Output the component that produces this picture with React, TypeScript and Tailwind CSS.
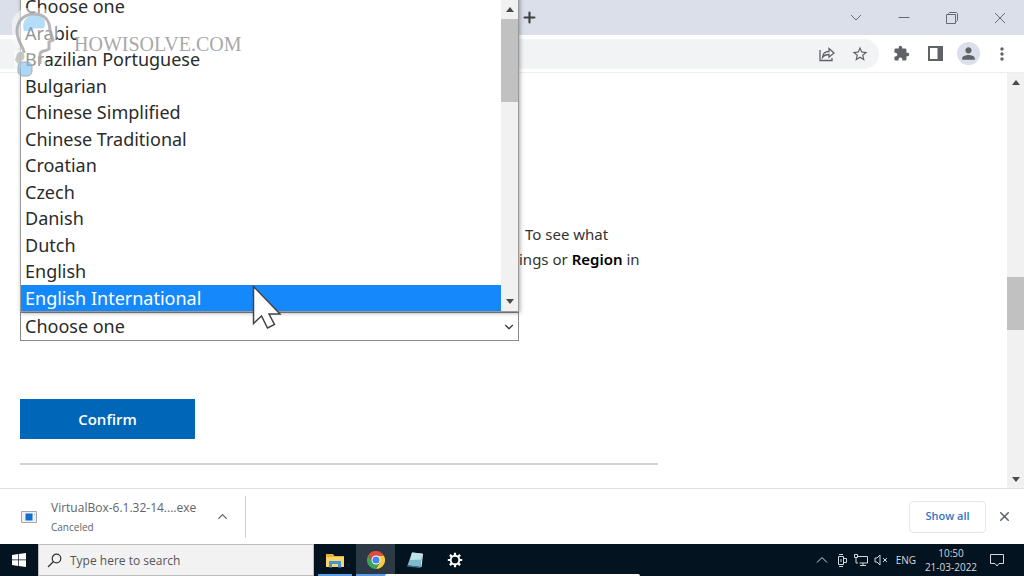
import { useState } from "react";
import { MdExtension, MdMoreVert, MdPerson, MdStarBorder } from "react-icons/md";
import { ChevronDown, ChevronUp, Plus, X } from "lucide-react";

const LANGUAGES = [
  "Choose one",
  "Arabic",
  "Brazilian Portuguese",
  "Bulgarian",
  "Chinese Simplified",
  "Chinese Traditional",
  "Croatian",
  "Czech",
  "Danish",
  "Dutch",
  "English",
  "English International",
];

function Arrow({ up = false }: { up?: boolean }) {
  return (
    <svg viewBox="0 0 8 5" className="w-2 h-[5px] fill-[#4a4a4a]">
      <path d={up ? "M0 5 4 0 8 5Z" : "M0 0h8L4 5Z"} />
    </svg>
  );
}

function TabStrip() {
  return (
    <header className="flex h-[35px] shrink-0 items-center bg-[#dadfe9] text-[#5f6368]">
      <button aria-label="New tab" className="ml-[521px] mr-auto text-[#3c4043]">
        <Plus size={17} strokeWidth={3} />
      </button>
      <div className="flex text-[#666b73]">
        <button aria-label="Search tabs" className="flex w-12 h-[30px] items-center justify-center">
          <svg viewBox="0 0 12 12" className="size-3 fill-none stroke-current">
            <path d="M1 3l5 5 5-5" />
          </svg>
        </button>
        <button aria-label="Minimize" className="flex w-12 h-[30px] items-center justify-center">
          <svg viewBox="0 0 12 12" className="size-3 fill-none stroke-current">
            <path d="M0.500 5.500h11" />
          </svg>
        </button>
        <button aria-label="Restore" className="flex w-12 h-[30px] items-center justify-center">
          <svg viewBox="0 0 12 12" className="size-3 fill-none stroke-current">
            <path d="M0.500 2.500h9v9h-9zM2.500 2.500v-1l1-1h7l1 1v7l-1 1h-1" />
          </svg>
        </button>
        <button aria-label="Close" className="flex w-12 h-[30px] items-center justify-center">
          <svg viewBox="0 0 12 12" className="size-3 fill-none stroke-current">
            <path d="M1 1l10 10M11 1L1 11" />
          </svg>
        </button>
      </div>
    </header>
  );
}

function Toolbar() {
  return (
    <div className="flex h-[38px] shrink-0 items-center border-b border-[#eceeef] bg-white pr-3 text-[#5f6368]">
      <div className="flex h-[30px] flex-1 items-center justify-end gap-4 rounded-r-full bg-[#f1f3f4] pr-2.5">
        <button aria-label="Share this page">
          <svg viewBox="0 0 16 16" className="size-4 fill-none stroke-current" strokeWidth="1.300">
            <path d="M1 4v10.500h12V12" />
            <path d="M3.500 11.500c.3-4 2.700-6 6.500-6V2.500L15 7l-5 4.200V8.500c-3 0-5 .8-6.500 3z" />
          </svg>
        </button>
        <button aria-label="Bookmark this tab">
          <MdStarBorder size={18} />
        </button>
      </div>
      <div className="ml-3.5 flex items-center">
        <button aria-label="Extensions">
          <MdExtension size={17} />
        </button>
        <button aria-label="Side panel" className="ml-[18px]">
          <svg viewBox="0 0 15 15" className="size-[15px]">
            <path d="M1 1h13v13H1z" className="fill-white stroke-current" strokeWidth="2" />
            <path d="M9.500 1H14v13H9.500z" className="fill-current" />
          </svg>
        </button>
        <button
          aria-label="Profile"
          className="ml-[14px] flex size-[23px] items-center justify-center rounded-full bg-[#dadfe9]"
        >
          <MdPerson size={19} />
        </button>
        <button aria-label="Menu" className="ml-3">
          <MdMoreVert size={20} />
        </button>
      </div>
    </div>
  );
}

function LanguageSelect() {
  const [active, setActive] = useState("English International");

  return (
    <div className="relative w-[499px] font-['Noto_Sans',sans-serif]">
      <label htmlFor="language" className="sr-only">
        Select the product language
      </label>
      <select
        id="language"
        className="block h-[29px] w-full appearance-none border border-[#8a8a8a] bg-white px-1 text-lg leading-[27px] text-[#2b2b2b] outline-none"
      >
        {LANGUAGES.map((l) => (
          <option key={l}>{l}</option>
        ))}
      </select>
      <ChevronDown
        size={14}
        className="pointer-events-none absolute right-[3px] top-2 text-[#333]"
      />
      <div className="absolute bottom-full left-0 z-10 flex h-[320px] w-full border border-[#9b9b9b] bg-white shadow-[1px_1px_4px_rgba(0,0,0,0.35)]">
        <ul role="listbox" aria-label="Languages" className="flex flex-1 flex-col text-lg leading-6">
          {LANGUAGES.map((l) => (
            <li
              key={l}
              role="option"
              aria-selected={l === active}
              onMouseEnter={() => setActive(l)}
              className={
                l === active
                  ? "flex flex-1 items-center bg-[#1589fb] px-1 text-white"
                  : "flex flex-1 items-center px-1 text-[#2b2b2b]"
              }
            >
              {l}
            </li>
          ))}
        </ul>
        <div className="flex w-[17px] flex-col items-center bg-[#f1f1f1] pb-[7px] pt-3.5">
          <Arrow up />
          <div className="mt-[7px] h-[83px] w-full bg-[#c1c1c1]" />
          <div className="mt-auto">
            <Arrow />
          </div>
        </div>
      </div>
    </div>
  );
}

function Page() {
  return (
    <main className="flex min-h-0 flex-1 bg-white">
      <div className="flex-1 pl-5 pt-[149px]">
        <p className="pl-[499px] font-['Noto_Sans',sans-serif] text-[15px] leading-[25px] text-[#333]">
          <span className="ml-1.5">To see what</span>
          <br />
          ings or <b className="font-semibold text-black">Region</b> in
        </p>
        <div className="mt-10">
          <LanguageSelect />
        </div>
        <button className="mt-[58px] block h-10 w-[175px] bg-[#0067b8] text-[15px] font-semibold text-white">
          Confirm
        </button>
        <hr className="mt-6 w-[638px] border-t-2 border-[#d2d2d2]" />
      </div>
      <div className="flex w-[17px] flex-col items-center bg-[#f1f1f1] pb-1.5 pt-[7px]">
        <Arrow up />
        <div className="mt-auto h-[53px] w-full bg-[#c1c1c1]" />
        <div className="mt-[147px]">
          <Arrow />
        </div>
      </div>
    </main>
  );
}

function DownloadBar() {
  return (
    <section className="flex h-14 shrink-0 items-center border-t border-[#e0e0e0] bg-white pl-[21px] pr-3 text-[#5f6368]">
      <svg viewBox="0 0 16 12" className="h-3 w-4">
        <path d="M.5.5h15v11H.5z" className="fill-[#eef0f2] stroke-[#a5a8ab]" />
        <path d="M4.500 2.500h7v7h-7z" className="fill-[#0f6fd0]" />
        <path d="M13 3h1v1h-1z" className="fill-[#a5a8ab]" />
      </svg>
      <div className="ml-3.5 w-[160px]">
        <div className="text-xs leading-5">VirtualBox-6.1.32-14....exe</div>
        <div className="text-[10px] leading-[18px]">Canceled</div>
      </div>
      <button aria-label="Download options" className="ml-1">
        <ChevronUp size={15} />
      </button>
      <div className="ml-[15px] h-[42px] w-px bg-[#cfd1d4]" />
      <button className="ml-auto h-8 w-[77px] rounded border border-[#e4e6e9] text-[11px] font-semibold text-[#3572c6]">
        Show all
      </button>
      <button aria-label="Close downloads" className="ml-[11px]">
        <X size={15} strokeWidth={2.500} />
      </button>
    </section>
  );
}

function ChromeLogo() {
  return (
    <svg viewBox="0 0 48 48" className="size-[18px]">
      <path d="M24 12h20.800A24 24 0 0 1 24 48l10.400-18z" fill="#fbcb3d" />
      <path d="M3.200 12A24 24 0 0 1 44.800 12H24L13.600 30z" fill="#e24a3c" />
      <path d="M3.200 12A24 24 0 0 0 24 48l10.400-18H13.600z" fill="#3aa757" />
      <circle cx="24" cy="24" r="12" fill="#fff" />
      <circle cx="24" cy="24" r="9.500" fill="#4285f4" />
    </svg>
  );
}

function Taskbar() {
  return (
    <footer className="flex h-8 shrink-0 bg-[#03131f] text-white">
      <button aria-label="Start" className="flex w-[38px] items-center justify-center">
        <svg viewBox="0 0 14 14" className="size-[14px] fill-white">
          <path d="M0 2l6-.9v5.500H0zM6.700 1 14 0v6.600H6.700zM0 7.300h6v5.600L0 12zM6.700 7.300H14V14l-7.300-1z" />
        </svg>
      </button>
      <label className="flex w-[276px] items-center border border-[#bdbdbd] bg-[#f2f2f2] pl-2">
        <svg viewBox="0 0 15 15" className="size-[15px] fill-none stroke-[#333]">
          <circle cx="9.500" cy="5.500" r="4.300" strokeWidth="1.200" />
          <path d="M6.500 8.500 1 14" strokeWidth="1.300" />
        </svg>
        <input
          aria-label="Search"
          placeholder="Type here to search"
          className="ml-2 min-w-0 flex-1 bg-transparent pt-0.5 text-xs text-[#333] outline-none placeholder:text-[#555]"
        />
      </label>
      <button
        aria-label="File Explorer"
        className="ml-1 flex w-[34px] items-center justify-center border-b-2 border-[#5b9ee6] pt-0.5"
      >
        <svg viewBox="0 0 18 15" className="h-[15px] w-[18px]">
          <path d="M0 1h7l1.500 2H18v11H0z" fill="#e8b03c" />
          <path d="M0 4h18v10H0z" fill="#fbd56c" />
          <path d="M3 8h12v6.500h-3V11H6v3.500H3z" fill="#4595d6" />
        </svg>
      </button>
      <button
        aria-label="Google Chrome"
        className="ml-1 flex w-[39px] items-center justify-center border-b-2 border-[#5b9ee6] bg-[#2d3a45] pt-0.5"
      >
        <ChromeLogo />
      </button>
      <button aria-label="Notepad" className="flex w-10 items-center justify-center">
        <svg viewBox="0 0 18 18" className="size-[18px]">
          <path d="M6 1.500l10 1-1.500 13.500-13-1.500z" fill="#7fb9cc" />
          <path d="M6 1.500l10 1-.8 6L4 9z" fill="#c3e3ea" />
          <path d="M16 2.500l1 .5-1.500 13h-1z" fill="#eef4f5" />
          <path d="M1.500 14l13 2v1L1 15.500z" fill="#3e7389" />
        </svg>
      </button>
      <button aria-label="Settings" className="flex w-10 items-center justify-center">
        <svg viewBox="0 0 16 16" className="size-4 fill-none stroke-white">
          <circle cx="8" cy="8" r="4.300" strokeWidth="1.900" />
          <path
            d="M8 .8v2.800M8 12.400v2.800M.8 8h2.800M12.400 8h2.800M2.900 2.900l2 2M11.100 11.100l2 2M2.900 13.100l2-2M11.100 4.900l2-2"
            strokeWidth="2.200"
          />
        </svg>
      </button>
      <div className="ml-auto flex items-center pr-5 text-[#d5d9dd]">
        <svg viewBox="0 0 12 12" className="size-3 fill-none stroke-current">
          <path d="M1 8.500l5-5 5 5" />
        </svg>
        <svg viewBox="0 0 12 14" className="ml-2 h-3.5 w-3 fill-none stroke-current">
          <path d="M2.500 3.500h5v8h-5zM7.500 5.500h3v4h-3M3 1.500h4M3 13.500h4M5 6v3" />
        </svg>
        <svg viewBox="0 0 14 12" className="ml-1.5 h-3 w-3.5 fill-none stroke-current">
          <path d="M4 2.500h9.500v6.500h-8M9 9v2.500M6 11.500h6M.5.500h3v3h-3zM2 3.500V9h2" />
        </svg>
        <svg viewBox="0 0 14 12" className="ml-1.5 h-3 w-3.5 fill-none stroke-current">
          <path d="M1 4h2l3-3v10L3 8H1zM9 4l4 4M13 4L9 8" />
        </svg>
        <span className="ml-2 text-[10px]">ENG</span>
        <div className="ml-2 w-[54px] whitespace-nowrap text-center text-[10px] leading-[14px]">
          <div>10:50</div>
          <div>21-03-2022</div>
        </div>
        <svg viewBox="0 0 14 14" className="ml-3 size-3.5 fill-none stroke-current">
          <path d="M.5 1.500h13v9H9L7 13l-2-2.500H.5z" />
        </svg>
      </div>
    </footer>
  );
}

function Watermark() {
  return (
    <div className="pointer-events-none absolute left-3 top-2 z-20 flex">
      <svg viewBox="0 0 62 74" className="h-[74px] w-[62px] fill-none">
        <circle cx="22" cy="22" r="24" fill="#fff" fillOpacity="0.500" />
        <path d="M2 42h32v18H2z" fill="#fff" fillOpacity="0.500" />
        <path
          d="M12 23c-3-10 3-16 11-16 9 0 12 7 9 13-6 2-10-2-12 3z"
          fill="#5db4ee"
          fillOpacity="0.450"
        />
        <path
          d="M12 45c0-6-7-11-7-22C5 12 13 6 22 6c11 0 16 7 16 17l3 9-4 2v7c-3 3-8 0-9 5v10"
          stroke="#a9a9a9"
          strokeOpacity="0.850"
          strokeWidth="3"
        />
        <path d="M5 46c4-5 9-1 7 5l-6 5-3-4z" fill="#b9b9b9" fillOpacity="0.800" />
        <rect x="6" y="54" width="14" height="14" rx="5" fill="#78bdf0" fillOpacity="0.600" stroke="#aaa" />
      </svg>
      <span className="mt-[22px] font-['Liberation_Serif',serif] text-xl leading-7 text-[#a8a8a8]">
        HOWISOLVE.COM
      </span>
    </div>
  );
}

export default function App() {
  return (
    <div className="relative flex h-screen flex-col overflow-hidden bg-white font-['Open_Sans','Noto_Sans',sans-serif]">
      <TabStrip />
      <Toolbar />
      <Page />
      <DownloadBar />
      <Taskbar />
      <Watermark />
      <div className="absolute bottom-0 left-[385px] h-0.5 w-[255px] rounded-t bg-white" />
      <svg
        viewBox="0 0 30 44"
        className="pointer-events-none absolute left-[252px] top-[285px] z-30 h-11 w-[30px] fill-white stroke-[#444]"
        strokeWidth="1.500"
      >
        <path d="M1.500 1.500v37l8-7.500 6 12 7-3.500-5.500-10.500h11z" />
      </svg>
    </div>
  );
}
